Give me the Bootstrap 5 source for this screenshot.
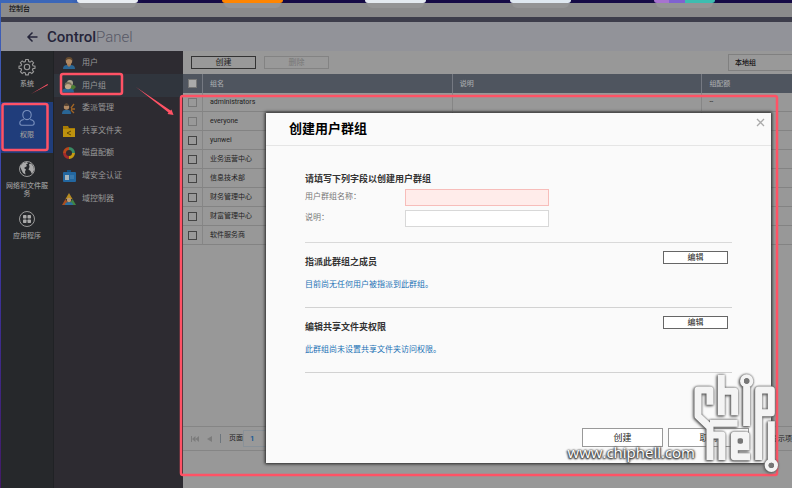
<!DOCTYPE html>
<html lang="zh-CN">
<head>
<meta charset="utf-8">
<meta name="viewport" content="width=device-width, initial-scale=1">
<title>控制台</title>
<link href="https://cdn.jsdelivr.net/npm/bootstrap@5.3.0/dist/css/bootstrap.min.css" rel="stylesheet">
<style>
body{font-family:Roboto,"Noto Sans CJK SC",sans-serif;font-size:7px;line-height:12px;color:#222;background:linear-gradient(#3e63b8,#3b38a5 50%,#431a66);}
button,input,select{font-family:inherit}
.desk-strip{height:3px;background:linear-gradient(90deg,#3c67b8 0,#3c67b8 9%,#150a45 18%,#150a45 100%)}
.dock-icon{position:absolute;top:-17px;width:61px;height:20px;border-radius:0 0 3px 3px}
.dock-icon::after{content:"";position:absolute;left:2px;right:2px;top:20px;height:5px;border-radius:0 0 12px 12px;background:#ffffff14}
.win{margin-left:1px}
.titlebar{height:14px;background:#8b8b8c;color:#111;font-size:7px;line-height:13px;font-weight:500}
.band{height:5px;background:#3d3d4b}
.app-head{height:29px;background:#929399;color:#25253a}
.app-title{font-size:15px;line-height:28px;font-weight:500;margin:0}
.app-title span{font-weight:300;color:#575866}
.rail{width:53px;background:#26282b;border-right:1px solid #202225}
.rail a{color:#999;text-decoration:none;text-align:center;height:51px;line-height:8px;padding-top:7px;font-size:7px;font-weight:500}
.rail a:nth-child(3){height:50px}
.rail a.on{background:#203d7b}
.rail svg{width:18px;height:18px;margin-bottom:4px}
.side{width:129px;background:#2d2b31}
.side a{color:#999;text-decoration:none;height:23px;font-size:8px;padding-left:8px;gap:6px}
.side a:nth-child(3),.side a:nth-child(5){height:22px}
.side a.on{background:#30353d}
.side svg{width:14px;height:14px}
.main-pane{background:#989898;min-width:0}
.tools{height:23px;padding:0 0 0 8px}
.btn-line{border:1px solid #333;border-radius:0;background:#999;color:#222;height:13px;width:65px;font-size:8px;line-height:10px;padding:0}
.btn-line:disabled{opacity:1;border-color:#838383;background:#999;color:#777}
.group-select{height:17px;width:64px;border:1px solid #808080;border-right:0;background:#999;appearance:none;font-size:7px;padding:0 6px;color:#111;font-weight:500}
.grid-table{table-layout:fixed;width:100%;border-collapse:separate;border-spacing:0}
.grid-table th{height:19px;background:#4f555f;color:#a3a5a9;font-weight:500;font-size:7px;padding:0 7px;border-left:1px solid #757982}
.grid-table td{height:19px;border-bottom:1px solid #838383;border-left:1px solid #868686;padding:0 7px;font-size:7px;line-height:12px}
.grid-table tr>:first-child{border-left:0;padding:0 5px}
.grid-table input{appearance:none;display:block;width:9px;height:9px;border:1px solid #444;margin:0;background:#999}
.grid-table input:disabled{border-color:#777}
.grid-table th input{background:#aaa;border-color:#777}
.pager{height:25px;margin-top:auto;border-top:1px solid #858585;border-bottom:1px solid #858585;margin-bottom:37px}
.pager button{border:0;background:none;color:#7c7c7c;padding:0}
.pager input{height:17px;width:34px;border:1px solid #899198;background:#999;color:#0d5594;font-size:8px;font-weight:500;padding:0 6px}
.dialog-win{position:absolute;left:266px;right:21px;top:113px;bottom:25px;background:#fafafa;box-shadow:0 0 3px 1px #222}
.dlg-head{height:33px;border-bottom:1px solid #e5e5e5;padding:0 6px 0 23px}
.dlg-head h2{font-size:13px;line-height:31px;font-weight:700;margin:0;color:#000}
.dlg-close{width:9px;height:9px;border:0;background:none;padding:0;margin-top:5px}
.dlg-close svg{display:block;width:9px;height:9px}
.dlg-body{padding:26px 39px 0}
.dlg-body h3{font-size:9px;line-height:14px;font-weight:700;margin:0;color:#333}
.fields{padding:3px 0 11px}
.field-row{height:21px}
.field-row label{width:100px;font-size:8px;line-height:15px;color:#777}
.field-row input{width:144px;height:17px;border:1px solid #d8d8d8;border-radius:0;background:#fff;padding:0 4px;font-size:8px}
.field-row input:required{background:#ffecea;border-color:#f7bdba}
.sect{height:65px;border-bottom:1px solid #d2d2d2;padding:8px 4px 0 0}
.sect.first{border-top:1px solid #d9d9d9;height:66px}
.sect h3{margin-top:4px}
.sect p{margin:10px 0 0;font-size:8px;color:#1b72b5}
.dialog-win .btn-line{background:#fff;border-color:#666}
.dlg-foot{padding:0 22px 16px;gap:5px}
.dialog-win .dlg-foot .btn-line{width:81px;height:19px;border-color:#999;font-size:9px}
.notes{position:absolute;left:0;top:0;width:792px;height:488px;pointer-events:none}
.stamp-url{position:absolute;right:97px;bottom:26px;font:15px/20px "Open Sans",sans-serif;color:#fff;text-shadow:0 0 2px #333,0 1px 2px #333,1px 0 2px #555,-1px 1px 2px #444}
.stamp-logo{position:absolute;right:6px;bottom:10px;width:100px;height:112px;filter:drop-shadow(0 0 1px #555) drop-shadow(-1px 1px 1px #666)}
</style>
<script src="https://cdn.jsdelivr.net/npm/bootstrap@5.3.0/dist/js/bootstrap.bundle.min.js"></script>
</head>
<body class="vh-100 overflow-hidden position-relative d-flex flex-column">
<div class="desk-strip"></div>
<div class="win flex-grow-1 d-flex flex-column">
  <div class="titlebar px-2">控制台</div>
  <div class="band"></div>
  <header class="app-head d-flex align-items-center">
    <button class="btn p-0 border-0 d-flex ms-4 me-2" aria-label="返回"><svg width="14" height="14" viewBox="0 0 14 14" fill="none" stroke="#25253a" stroke-width="1.5"><path d="M12.500 7H3M7.500 2.500 3 7 7.500 11.500"/></svg></button>
    <h1 class="app-title">Control<span>Panel</span></h1>
  </header>
  <div class="d-flex flex-grow-1">
    <nav class="rail flex-shrink-0 d-flex flex-column">
      <a href="#" class="d-flex flex-column align-items-center"><svg viewBox="0 0 18 18" fill="none" stroke="#999" stroke-width="1.1"><path d="M7.7 1.5h2.6l.4 2 1.4.6 1.7-1.2 1.8 1.8-1.2 1.7.6 1.4 2 .4v2l-2 .4-.6 1.4 1.2 1.7-1.8 1.8-1.7-1.2-1.4.6-.4 2H7.7l-.4-2-1.4-.6-1.7 1.2-1.8-1.8 1.2-1.7L3 10.600l-2-.4v-2l2-.4.6-1.400-1.200-1.700 1.800-1.800 1.700 1.200 1.400-.6z"/><circle cx="9" cy="9" r="2.700"/></svg>系统</a>
      <a href="#" class="on d-flex flex-column align-items-center"><svg viewBox="0 0 18 18" fill="none" stroke="#7990bd" stroke-width="1.1"><path d="M9 1.500c-2.600 0-4.200 1.800-4.200 4.300S6.500 10.600 9 10.600s4.200-2.300 4.200-4.800S11.600 1.500 9 1.500zM5.800 10.500c-2.600.5-4 1.700-4 3.500 0 1.700.6 2.200 2 2.200h10.400c1.400 0 2-.5 2-2.200 0-1.800-1.400-3-4-3.500"/></svg>权限</a>
      <a href="#" class="d-flex flex-column align-items-center"><svg viewBox="0 0 18 18"><circle cx="9" cy="9" r="7.500" fill="#26282b" stroke="#999" stroke-width="1"/><path d="M2 6.500 5 3l4-1 1 1.500-2 1 1 1.500-3 2 2 1.500-1 2 .5 3L5 13 3.500 10zM11 4l2-.5 2.500 3L16 10l-2 4-1.500-3-2-1.500 1-2.500z" fill="#aaa"/></svg>网络和文件服<br>务</a>
      <a href="#" class="d-flex flex-column align-items-center"><svg viewBox="0 0 18 18"><circle cx="9" cy="9" r="7.500" fill="none" stroke="#999"/><g fill="#aaa"><rect x="5" y="5" width="3.500" height="3.500" rx=".7"/><rect x="9.500" y="5" width="3.500" height="3.500" rx=".7"/><rect x="5" y="9.500" width="3.500" height="3.500" rx=".7"/><rect x="9.500" y="9.500" width="3.500" height="3.500" rx=".7"/></g></svg>应用程序</a>
    </nav>
    <nav class="side flex-shrink-0 d-flex flex-column">
      <a href="#" class="d-flex align-items-center"><svg viewBox="0 0 14 14"><path d="M1 13q0-4 4-4h4q4 0 4 4z" fill="#2a6594"/><path d="m5 9 2 2 2-2V7H5z" fill="#a67b55"/><circle cx="7" cy="5" r="3.200" fill="#b18963"/><path d="M3.500 5Q3 1 7 1t3.500 4Q9 3 7 3T3.500 5z" fill="#62492e"/></svg>用户</a>
      <a href="#" class="on d-flex align-items-center"><svg viewBox="0 0 14 14"><path d="M8 6h4l2 2-4 4H7z" fill="#4b7c32"/><circle cx="8" cy="4" r="3" fill="#aaa48e"/><path d="M0 13.500q0-4 4-4h4q4 0 4 4z" fill="#2a6594"/><circle cx="6" cy="7" r="3.200" fill="#c0a988"/><path d="M3 7Q2 3 6 3t4 4Q8 5 6 5T3 7z" fill="#777058"/></svg>用户组</a>
      <a href="#" class="d-flex align-items-center"><svg viewBox="0 0 14 14"><path d="M0 13q0-4 3-4h3q3 0 3 4z" fill="#2a6594"/><circle cx="4.500" cy="6" r="2.700" fill="#b18963"/><path d="M2 5q1-3 2.500-3T7 5z" fill="#594534"/><path d="m9 7 3-4M9 8h4M9 9l3 3" stroke="#a16424" stroke-width="1.300"/></svg>委派管理</a>
      <a href="#" class="d-flex align-items-center"><svg viewBox="0 0 14 14"><path d="M1 2h5l1 2h6v9H1z" fill="#a87b04"/><path d="M1 5h12v8H1z" fill="#bd920e"/><path d="m9 7-4 2 4 2" stroke="#5d4605" fill="none"/></svg>共享文件夹</a>
      <a href="#" class="d-flex align-items-center"><svg viewBox="0 0 14 14" fill="none" stroke-width="3"><path d="M7 2.500A4.500 4.500 0 0 0 2.500 7" stroke="#b7471c"/><path d="M2.500 7A4.500 4.500 0 0 0 7 11.500" stroke="#a32b2b"/><path d="M7 11.500A4.500 4.500 0 0 0 11.500 7" stroke="#c69b12"/><path d="M11.500 7A4.500 4.500 0 0 0 7 2.500" stroke="#398a63"/></svg>磁盘配额</a>
      <a href="#" class="d-flex align-items-center"><svg viewBox="0 0 14 14"><path d="M5 1h4v3H5z" fill="#174c78"/><rect y="3" x="1" width="13" height="10" rx="1" fill="#2367a0"/><path d="M3 6h4v5H3z" fill="#a7b5bc"/><path d="M8 7h4M8 9h4" stroke="#4f8bba"/></svg>域安全认证</a>
      <a href="#" class="d-flex align-items-center"><svg viewBox="0 0 14 14"><path d="m7 1 3.500 6h-7z" fill="#b68b20"/><path d="m3.500 7 3.500 6H0z" fill="#a94f20"/><path d="m10.500 7 3.500 6H7z" fill="#408545"/><path d="M3 13q0-3 4-3t4 3z" fill="#2c70a0"/><circle cx="7" cy="8" r="2.200" fill="#bb9a72"/></svg>域控制器</a>
    </nav>
    <main class="main-pane flex-grow-1 d-flex flex-column">
      <div class="tools d-flex align-items-center gap-2">
        <button class="btn btn-line">创建</button>
        <button class="btn btn-line" disabled>删除</button>
        <select class="group-select ms-auto rounded-0" aria-label="组类型"><option>本地组</option></select>
      </div>
      <table class="grid-table">
        <colgroup><col style="width:19px"><col style="width:41%"><col style="width:41%"><col></colgroup>
        <thead><tr><th><input type="checkbox" aria-label="全选"></th><th>组名</th><th>说明</th><th>组配额</th></tr></thead>
        <tbody>
          <tr><td><input type="checkbox" disabled aria-label="administrators"></td><td>administrators</td><td></td><td>--</td></tr>
          <tr><td><input type="checkbox" disabled aria-label="everyone"></td><td>everyone</td><td></td><td></td></tr>
          <tr><td><input type="checkbox" aria-label="yunwei"></td><td>yunwei</td><td></td><td></td></tr>
          <tr><td><input type="checkbox" aria-label="业务运营中心"></td><td>业务运营中心</td><td></td><td></td></tr>
          <tr><td><input type="checkbox" aria-label="信息技术部"></td><td>信息技术部</td><td></td><td></td></tr>
          <tr><td><input type="checkbox" aria-label="财务管理中心"></td><td>财务管理中心</td><td></td><td></td></tr>
          <tr><td><input type="checkbox" aria-label="财富管理中心"></td><td>财富管理中心</td><td></td><td></td></tr>
          <tr><td><input type="checkbox" aria-label="软件服务商"></td><td>软件服务商</td><td></td><td></td></tr>
        </tbody>
      </table>
      <div class="pager d-flex align-items-center ps-2">
        <button aria-label="首页"><svg class="d-block" width="8" height="6" viewBox="0 0 8 6" fill="#7c7c7c"><path d="M0 0h1v6H0zM4.500 0v6L1 3zM8 0v6L4.500 3z"/></svg></button>
        <button class="ms-2" aria-label="上一页"><svg class="d-block" width="5" height="6" viewBox="0 0 5 6" fill="#7c7c7c"><path d="M5 0v6L0 3z"/></svg></button>
        <span class="border-start border-secondary ms-2 ps-2 d-flex" style="line-height:9px"><label for="pg">页面</label></span>
        <input id="pg" value="1">
        <span class="ms-auto text-nowrap">显示项</span>
      </div>
    </main>
  </div>
</div>
<i class="dock-icon" style="left:77px;background:#e9edf1"></i><i class="dock-icon" style="left:222px;background:#ff8500"></i><i class="dock-icon" style="left:365px;background:#e4eaf0"></i><i class="dock-icon" style="left:510px;background:#dfe8f0"></i><i class="dock-icon" style="left:654px;background:linear-gradient(90deg,#a773cf 25%,#7f62d0 25%,#7f62d0 50%,#3dbdb0 50%)"></i>

<section class="dialog-win d-flex flex-column" role="dialog" aria-labelledby="dt">
  <div class="dlg-head d-flex justify-content-between"><h2 id="dt">创建用户群组</h2><button class="dlg-close" aria-label="关闭"><svg viewBox="0 0 9 9" stroke="#aaa" stroke-width="1.300"><path d="m1 1 7 7M8 1 1 8"/></svg></button></div>
  <form class="dlg-body flex-grow-1">
    <h3>请填写下列字段以创建用户群组</h3>
    <div class="fields">
      <div class="field-row d-flex"><label for="gn">用户群组名称：</label><input id="gn" required></div>
      <div class="field-row d-flex"><label for="gd">说明：</label><input id="gd"></div>
    </div>
    <div class="sect first d-flex justify-content-between align-items-start"><div><h3>指派此群组之成员</h3><p>目前尚无任何用户被指派到此群组。</p></div><button type="button" class="btn btn-line">编辑</button></div>
    <div class="sect d-flex justify-content-between align-items-start"><div><h3>编辑共享文件夹权限</h3><p>此群组尚未设置共享文件夹访问权限。</p></div><button type="button" class="btn btn-line">编辑</button></div>
  </form>
  <div class="dlg-foot d-flex justify-content-end"><button class="btn btn-line">创建</button><button class="btn btn-line">取消</button></div>
</section>

<svg class="notes" viewBox="0 0 792 488" fill="none" stroke="#ff5265" stroke-width="2.500" aria-hidden="true">
  <rect x="2.500" y="104" width="45" height="46" rx="2"/><rect x="61" y="74" width="61" height="20" rx="2"/><rect x="181" y="96" width="596" height="379" rx="2"/>
  <path d="M136 87 170.500 110.500 171.500 109.500 173.500 115 167.500 114 168.500 112.500zM31 94 47.500 84 48 85z" fill="#ff5265" stroke="none"/>
</svg>
<svg class="stamp-logo" viewBox="0 0 300 336" fill="none" stroke="#f4f4f4" stroke-width="21" stroke-linejoin="round" aria-hidden="true">
  <path d="M72 116V72H36V150L72 184V282M72 172H155M80 207H108V282M106 26V148M106 76H146V148M182 62V180M180 252V208H145V272H192M145 242H188M218 282V72H256V140H220M256 166V284"/>
  <circle cx="182" cy="45" r="14" stroke-width="12"/><circle cx="256" cy="298" r="14" stroke-width="12"/>
  <g fill="#777" stroke="none"><circle cx="182" cy="45" r="8"/><circle cx="256" cy="298" r="8"/><circle cx="163" cy="225" r="8"/></g>
</svg>
<div class="stamp-url">www.chiphell.com</div>
</body>
</html>
